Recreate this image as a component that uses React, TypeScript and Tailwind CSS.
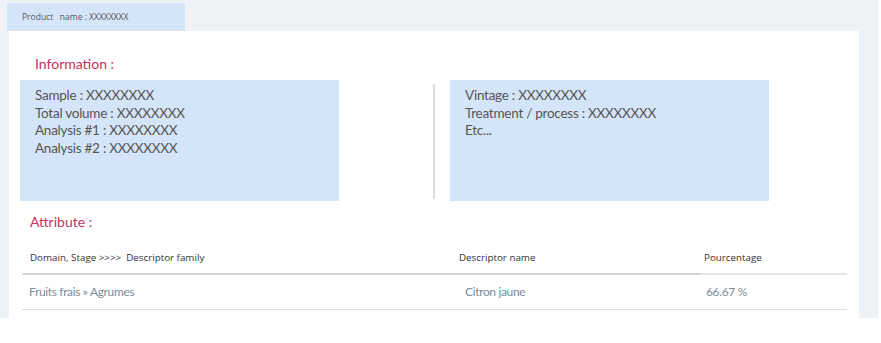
import React from 'react';

const infoLeft = [
  'Sample : XXXXXXXX',
  'Total volume : XXXXXXXX',
  'Analysis #1 : XXXXXXXX',
  'Analysis #2 : XXXXXXXX',
];

const infoRight = ['Vintage : XXXXXXXX', 'Treatment / process : XXXXXXXX', 'Etc...'];

const body = { fontFamily: 'Lato, "Open Sans", sans-serif' };
const head = { fontFamily: '"Open Sans", "Noto Sans", sans-serif' };

const InfoBox: React.FC<{ lines: string[] }> = ({ lines }) => (
  <div className="w-[319px] h-[121px] bg-[#d5e5f9] pl-[15px] pt-[7px] text-[13.5px] leading-[17.5px] tracking-[-0.25px] text-[#555555]">
    {lines.map((l) => (
      <div key={l}>{l}</div>
    ))}
  </div>
);

export default function App() {
  return (
    <div className="w-[878px] h-[318px] bg-[#eef2f6] pt-[3px]" style={body}>
      {/* Product tab */}
      <div
        className="ml-[7px] w-[178px] h-[28px] bg-[#d5e5f9] pl-[15px] flex items-center text-[8.5px] text-[#555555]"
        style={head}
      >
        Product&nbsp;&nbsp; name : XXXXXXXX
      </div>

      {/* Card */}
      <div className="ml-[9px] w-[850px] h-[287px] bg-white">
        <div className="pt-[24px] pl-[26px] text-[14px] leading-[18px] text-[#c2325e]">Information :</div>

        <div className="mt-[7px] ml-[11px] flex items-start">
          <InfoBox lines={infoLeft} />
          <div className="ml-[94px] mt-[4px] w-[2px] h-[115px] bg-[#dddddd]" />
          <div className="ml-[15px]">
            <InfoBox lines={infoRight} />
          </div>
        </div>

        <div className="mt-[12px] pl-[21px] text-[14px] leading-[18px] text-[#c2325e]">Attribute :</div>

        <div className="mt-[21px] ml-[13px] w-[825px]">
          <div className="flex h-[21px] items-start text-[9.8px] leading-[12px] text-[#333333]" style={head}>
            <div className="w-[428px] pl-[8px]">Domain, Stage &gt;&gt;&gt;&gt;&nbsp; Descriptor family</div>
            <div className="w-[245px] pl-[9px]">Descriptor name</div>
            <div className="flex-1 pl-[9px]">Pourcentage</div>
          </div>
          <div className="flex h-[2px]">
            <div className="w-[678px] bg-[#d6d6d6]" />
            <div className="flex-1 bg-[#e4e4e4]" />
          </div>
          <div className="flex h-[35px] items-center border-b border-[#dcdcdc] text-[12px] tracking-[-0.35px] text-[#7d8c99]">
            <div className="w-[428px] pl-[7px]">Fruits frais » Agrumes</div>
            <div className="w-[245px] pl-[15px]">Citron jaune</div>
            <div className="flex-1 pl-[11px]">66.67 %</div>
          </div>
        </div>
      </div>
    </div>
  );
}
